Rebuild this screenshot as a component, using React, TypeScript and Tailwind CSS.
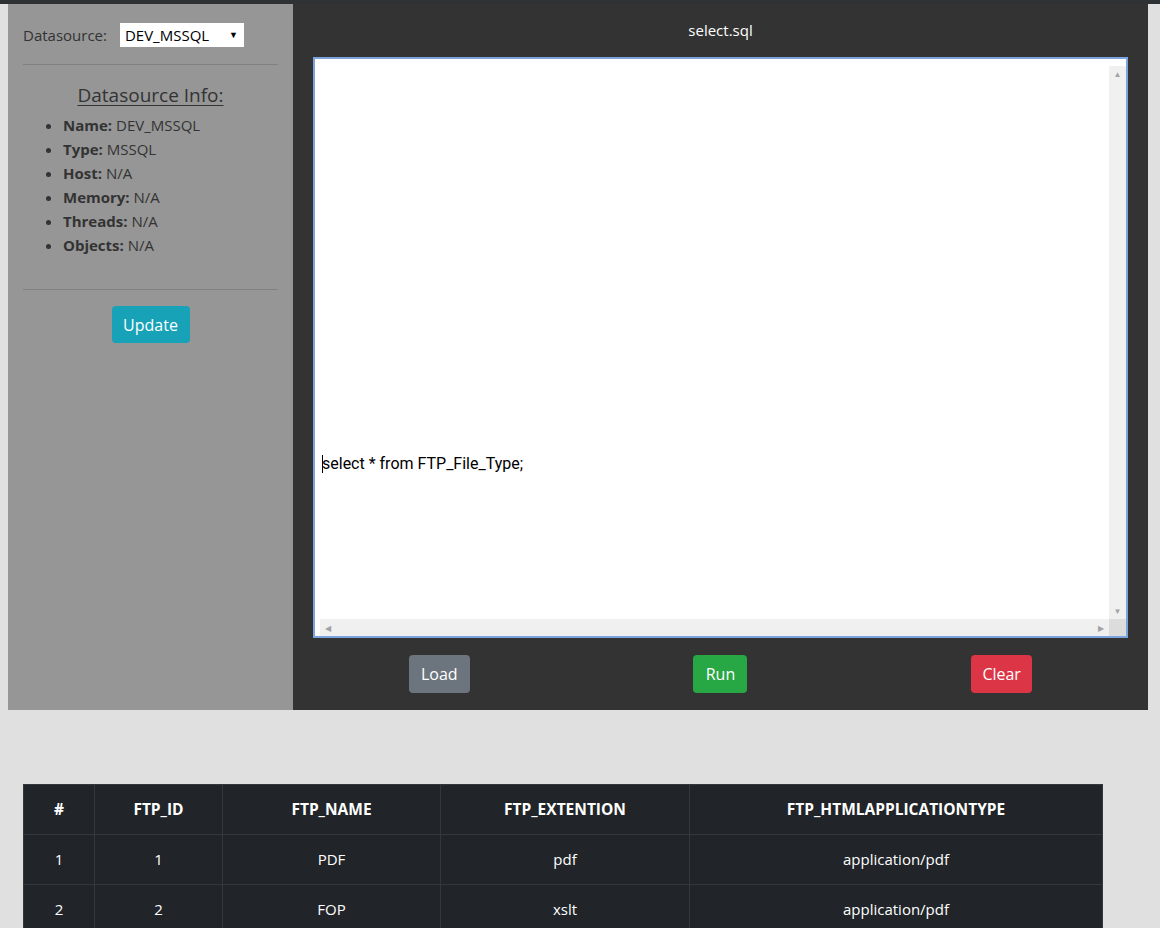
const info = [
  { label: "Name:", value: "DEV_MSSQL" },
  { label: "Type:", value: "MSSQL" },
  { label: "Host:", value: "N/A" },
  { label: "Memory:", value: "N/A" },
  { label: "Threads:", value: "N/A" },
  { label: "Objects:", value: "N/A" },
];

const columns = [
  { name: "#", w: "w-[71px]" },
  { name: "FTP_ID", w: "w-[128px]" },
  { name: "FTP_NAME", w: "w-[218px]" },
  { name: "FTP_EXTENTION", w: "w-[249px]" },
  { name: "FTP_HTMLAPPLICATIONTYPE", w: "" },
];

const rows = [
  ["1", "1", "PDF", "pdf", "application/pdf"],
  ["2", "2", "FOP", "xslt", "application/pdf"],
];

const font = { fontFamily: '"Open Sans", "Noto Sans", sans-serif' };

function Sidebar() {
  return (
    <aside className="w-[285px] shrink-0 bg-[#969696] px-[15px] text-[#333333]">
      <div className="mt-[19px] flex h-6 items-center text-[15px]">
        <span>Datasource:</span>
        <div className="ml-[13px] flex h-6 w-[124px] items-center justify-between bg-white pl-[5px] pr-[6px] text-black">
          <span>DEV_MSSQL</span>
          <span className="text-[9px]">▼</span>
        </div>
      </div>
      <hr className="mt-[17px] border-t border-[#808080]" />
      <h3 className="mt-4 text-center text-[19px] leading-7 font-medium underline underline-offset-[3px]">
        Datasource Info:
      </h3>
      <ul className="mt-1 list-disc pl-[40px] text-[15px] leading-6">
        {info.map((i) => (
          <li key={i.label}>
            <b className="font-bold">{i.label}</b> {i.value}
          </li>
        ))}
      </ul>
      <hr className="mt-8 border-t border-[#808080]" />
      <div className="mt-4 flex justify-center">
        <button className="h-[37px] w-[78px] rounded bg-[#17a2b8] text-[16px] text-white">
          Update
        </button>
      </div>
    </aside>
  );
}

function Editor() {
  return (
    <div className="mx-5 flex h-[581px] flex-col border-2 border-[#7ba3e0] bg-white pl-[5px] pt-[7px]">
      <div className="flex min-h-0 flex-1">
        <div className="relative flex-1 pl-[2px] pt-[388px] text-[16px] leading-5 text-black" style={{ fontFamily: "Roboto, sans-serif" }}>
          <span className="absolute left-[2px] top-[389px] h-[18px] w-px bg-black" />
          select * from FTP_File_Type;
        </div>
        <div className="flex w-[17px] flex-col items-center justify-between bg-[#f0f0f0] py-[4px] text-[8px] leading-none text-[#a3a3a3]">
          <span>▲</span>
          <span>▼</span>
        </div>
      </div>
      <div className="flex h-[17px]">
        <div className="flex flex-1 items-center justify-between bg-[#f0f0f0] px-[5px] text-[8px] leading-none text-[#a3a3a3]">
          <span>◀</span>
          <span>▶</span>
        </div>
        <div className="w-[17px] bg-[#dcdcdc]" />
      </div>
    </div>
  );
}

export default function App() {
  return (
    <div className="min-h-screen bg-[#e0e0e0] pb-10" style={font}>
      <div className="h-1 bg-[#2f3235]" />
      <div className="ml-2 mr-3 flex h-[706px]">
        <Sidebar />
        <main className="flex flex-1 flex-col bg-[#333333]">
          <div className="flex h-[53px] items-center justify-center text-[15px] text-white">
            select.sql
          </div>
          <Editor />
          <div className="mt-[17px] flex justify-around px-1 text-[16px] text-white">
            <button className="h-[38px] w-[61px] rounded bg-[#6c757d]">Load</button>
            <button className="h-[38px] w-[54px] rounded bg-[#28a745]">Run</button>
            <button className="h-[38px] w-[61px] rounded bg-[#dc3545]">Clear</button>
          </div>
        </main>
      </div>
      <table className="ml-[23px] mt-[74px] w-[1080px] table-fixed border-collapse bg-[#212529] text-center text-[15px] text-white">
        <thead>
          <tr className="h-[50px]">
            {columns.map((c) => (
              <th key={c.name} className={`${c.w} border border-[#32383e] text-[15.5px] font-bold`}>
                {c.name}
              </th>
            ))}
          </tr>
        </thead>
        <tbody>
          {rows.map((r) => (
            <tr key={r[0]} className="h-[50px]">
              {r.map((v, i) => (
                <td key={i} className="border border-[#32383e]">
                  {v}
                </td>
              ))}
            </tr>
          ))}
        </tbody>
      </table>
    </div>
  );
}
